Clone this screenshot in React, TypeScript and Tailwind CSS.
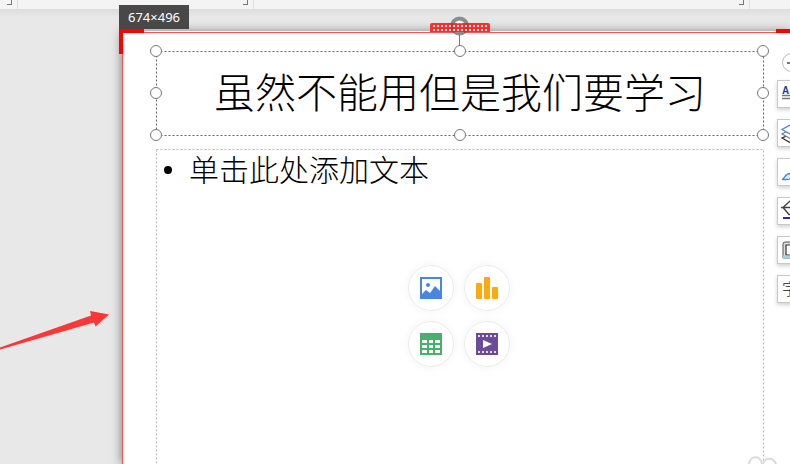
import type { ReactNode } from "react";

const tools: { label: string; icon: ReactNode }[] = [
  {
    label: "文本样式",
    icon: (
      <>
        <text x="4" y="13" fontSize="10" fontWeight="700" fill="#1f3f8f" fontFamily="Liberation Sans, sans-serif">
          A
        </text>
        <path d="M14 8.500h8M14 11.500h8M4 14.500h18M4 17.500h18" stroke="#777" strokeWidth="1.4" />
      </>
    ),
  },
  {
    label: "图层",
    icon: (
      <>
        <path d="M4 18l9 5 9-5-9-4z" fill="#fff" stroke="#333" strokeWidth="1.3" />
        <path d="M4 14l9 5 9-5-9-5z" fill="#fff" stroke="#777" strokeWidth="1.1" />
        <path d="M4 9.500l9 5 9-5-9-5z" fill="#fff" stroke="#4a86e0" strokeWidth="1.3" />
      </>
    ),
  },
  {
    label: "画笔",
    icon: (
      <path
        d="M4 20.500c3-1 3-6 8-6 3 1 1 5-2 6zM12 14.500L21 4l2 2-9 10"
        fill="#e4eefb"
        stroke="#4a86e0"
        strokeWidth="1.3"
      />
    ),
  },
  {
    label: "填充",
    icon: (
      <>
        <path d="M12 3L5 9.500l6 7h4l5-7-8-7M3 9.500h17" fill="none" stroke="#444" strokeWidth="1.4" />
        <path d="M5 20h17" stroke="#2c2c9c" strokeWidth="2" />
      </>
    ),
  },
  {
    label: "边框",
    icon: (
      <>
        <path d="M5 21V7q0-2 2-2h14v16z" fill="#ddd" stroke="#555" />
        <path d="M8 18V8h11v10z" fill="#fff" stroke="#333" strokeWidth="1.2" />
        <path d="M5 20h16" stroke="#a5d3d6" strokeWidth="3" />
      </>
    ),
  },
  {
    label: "字体",
    icon: (
      <text x="4" y="19" fontSize="16" fontWeight="300" fill="#111" fontFamily="Noto Sans CJK SC, sans-serif">
        字
      </text>
    ),
  },
];

const inserts: { label: string; icon: ReactNode }[] = [
  {
    label: "插入图片",
    icon: (
      <>
        <path d="M0 0h22v22H0z" fill="#4a86e0" />
        <path d="M2 2h18v12l-5-5-5 7-4-3-4 4z" fill="#fff" />
        <circle cx="8" cy="8" r="2" fill="#4a86e0" />
      </>
    ),
  },
  {
    label: "插入图表",
    icon: (
      <g fill="#fbab0d">
        <rect y="6" width="6" height="16" rx="1" />
        <rect x="8" width="6" height="22" rx="1" />
        <rect x="16" y="10" width="6" height="12" rx="1" />
      </g>
    ),
  },
  {
    label: "插入表格",
    icon: (
      <>
        <path d="M0 0h22v22H0z" fill="#45b16b" />
        <path
          d="M2 7h5v3H2zM9 7h4v3H9zM15 7h5v3h-5zM2 12h5v3H2zM9 12h4v3H9zM15 12h5v3h-5zM2 17h5v3H2zM9 17h4v3H9zM15 17h5v3h-5z"
          fill="#fff"
        />
      </>
    ),
  },
  {
    label: "插入视频",
    icon: (
      <>
        <path d="M0 0h22v22H0z" fill="#6d4b95" />
        <path d="M2 3h19M2 19h19" stroke="#e3dcec" strokeWidth="2" strokeDasharray="2 2" />
        <path d="M7 7l9 4-9 4z" fill="#fff" />
      </>
    ),
  },
];

const handles = [
  "left-0 top-0",
  "left-1/2 top-0",
  "left-full top-0",
  "left-0 top-1/2",
  "left-full top-1/2",
  "left-0 top-full",
  "left-1/2 top-full",
  "left-full top-full",
];

function RibbonGroup({ className }: { className: string }) {
  return (
    <div className={`flex justify-end border-r border-[#dedede] pr-[5px] ${className}`}>
      <span className="h-[5px] w-[5px] border-b border-r border-[#777]" />
    </div>
  );
}

// Dashed placeholder outline that follows the size of its parent
function Outline({ className }: { className: string }) {
  return (
    <svg
      className={`pointer-events-none absolute left-0 top-0 h-[calc(100%-1px)] w-[calc(100%-1px)] overflow-visible ${className}`}
    >
      <rect x="0.5" y="0.5" width="100%" height="100%" fill="none" stroke="currentColor" strokeDasharray="2 2" />
    </svg>
  );
}

function RotateHandle() {
  return (
    <svg className="absolute -top-[35px] left-1/2 -translate-x-1/2" width="60" height="36" viewBox="0 0 60 36">
      <circle cx="29.5" cy="10" r="7.500" fill="#eee" stroke="#8c8c8c" strokeWidth="4" />
      <path d="M0 16V9q0-2 2-2h56q2 0 2 2v7z" fill="#ff2c2c" />
      <path d="M22 7v3q0 4 3 6M37 7v3q0 4-3 6" fill="none" stroke="#c93030" strokeWidth="3" />
      <path d="M27 7q2.500-2 5 0" stroke="#fff" strokeWidth="2" fill="none" />
      <path d="M3 10h54M3 14h54" stroke="#eee" strokeWidth="2" strokeDasharray="2 2" />
      <path d="M29.500 19v17" stroke="#777" />
    </svg>
  );
}

function SideTools() {
  return (
    <div className="absolute -right-[15px] top-[20px] flex flex-col items-center gap-[11px]">
      <button
        aria-label="收起"
        className="-mb-[3px] flex h-[19px] w-[19px] items-center justify-center rounded-full border border-[#bbb] bg-white"
      >
        <span className="h-[2px] w-[9px] bg-[#777]" />
      </button>
      {tools.map((tool) => (
        <button
          key={tool.label}
          aria-label={tool.label}
          className="h-[28px] w-[28px] border border-[#c8c8c8] bg-white shadow-[0_2px_4px_rgba(0,0,0,0.18)]"
        >
          <svg width="26" height="26" viewBox="0 0 26 26">
            {tool.icon}
          </svg>
        </button>
      ))}
    </div>
  );
}

export default function App() {
  return (
    <div className="relative flex h-screen flex-col overflow-hidden bg-[#e8e8e8] font-['Noto_Sans_CJK_SC',sans-serif]">
      <header className="flex h-[9px] shrink-0 bg-[#f4f4f4]">
        <RibbonGroup className="w-[18px]" />
        <RibbonGroup className="w-[236px]" />
        <RibbonGroup className="flex-1" />
        <div className="w-[40px]" />
      </header>

      <main className="flex flex-1 bg-linear-to-b from-[#dcdcdc] to-[#e8e8e8] to-[8px] pl-[122px] pt-[23px]">
        <section className="relative flex flex-1 flex-col gap-[13px] border-l border-t border-[#ff5252] bg-white pl-[33px] pr-[26px] pt-[18px] shadow-[0_-1px_0_#fff,0_0_10px_rgba(0,0,0,0.5)]">
          {/* Capture area corners and size label */}
          <div className="absolute -left-[4px] -top-[4px] h-[25px] w-[25px] border-l-4 border-t-4 border-[#f00]" />
          <div className="absolute -top-[4px] right-0 h-[4px] w-[14px] bg-[#f00]" />
          <div className="absolute -left-[4px] -top-[28px] bg-[#484848] px-[9px] font-['Noto_Sans',sans-serif] text-[13px] leading-[24px] text-white">
            674×496
          </div>

          <div className="relative flex h-[85px] shrink-0 items-center justify-center pb-[6px]">
            <Outline className="text-[#666]" />
            <h1 className="whitespace-nowrap text-[41px] font-light leading-none text-black">
              虽然不能用但是我们要学习
            </h1>
            <div className="absolute bottom-px left-0 right-px top-0">
              <RotateHandle />
              {handles.map((position) => (
                <span
                  key={position}
                  className={`absolute h-[12px] w-[12px] -translate-x-1/2 -translate-y-1/2 rounded-full border border-[#777] bg-white ${position}`}
                />
              ))}
            </div>
          </div>

          {/* The content placeholder runs past the bottom of the view */}
          <div className="relative -mb-2 flex flex-1 flex-col items-center pr-[3px]">
            <Outline className="text-[#bbb]" />
            <ul className="w-full text-[30px] font-light leading-[38px] text-black">
              <li className="flex items-center gap-[17px] pl-[8px]">
                <span className="mt-1 h-[8px] w-[8px] rounded-full bg-black" />
                单击此处添加文本
              </li>
            </ul>
            <div className="mt-[78px] grid grid-cols-2 gap-[10px]">
              {inserts.map((item) => (
                <button
                  key={item.label}
                  aria-label={item.label}
                  className="flex h-[46px] w-[46px] items-center justify-center rounded-full border border-[#ececec] bg-white shadow-[0_0_8px_rgba(0,0,0,0.05)]"
                >
                  <svg width="22" height="22" viewBox="0 0 22 22">
                    {item.icon}
                  </svg>
                </button>
              ))}
            </div>
          </div>

          <SideTools />
        </section>
      </main>

      <svg className="absolute left-0 top-[310px]" width="110" height="40" viewBox="0 0 110 40">
        <path d="M0 37.500L91 5.500 90 1l19 3.500L95.500 16.500 94 12.500 0 39.500z" fill="#ff3636" />
      </svg>
      <svg className="absolute bottom-0 right-[12px]" width="32" height="9" viewBox="0 0 32 9">
        <path d="M3 9c1-9 12-9 13 0M17 9c2-7 10-7 13 0" fill="none" stroke="#dadada" strokeWidth="2" />
      </svg>
    </div>
  );
}
